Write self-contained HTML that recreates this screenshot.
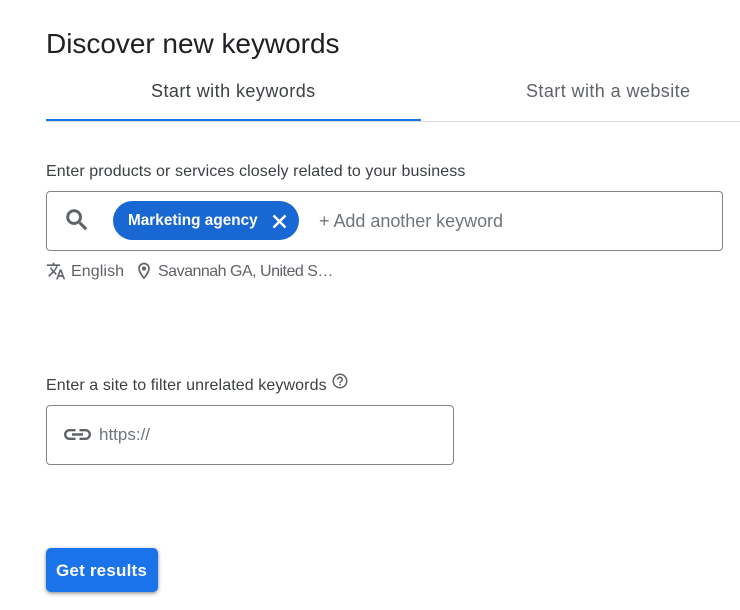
<!DOCTYPE html>
<html>
<head>
<meta charset="utf-8">
<style>
html,body{margin:0;padding:0;background:#fff;}
body{width:740px;height:610px;position:relative;overflow:hidden;font-family:"Liberation Sans",sans-serif;}
.t{position:absolute;white-space:nowrap;line-height:1;}
.box{position:absolute;border:1px solid #80868b;border-radius:4px;box-sizing:border-box;background:#fff;}
svg{position:absolute;}
</style>
</head>
<body>
<div class="t" style="left:46px;top:30px;font-size:28px;color:#202124;letter-spacing:-.03px;">Discover new keywords</div>
<div class="t" style="left:151px;top:82px;font-size:18px;color:#3c4043;letter-spacing:.45px;">Start with keywords</div>
<div class="t" style="left:526px;top:82px;font-size:18px;color:#5f6368;letter-spacing:.42px;">Start with a website</div>
<div style="position:absolute;left:46px;top:121px;width:694px;height:1px;background:#dadce0;"></div>
<div style="position:absolute;left:46px;top:119px;width:375px;height:2px;background:#1a73e8;"></div>

<div class="t" style="left:46px;top:164px;font-size:16px;color:#3c4043;letter-spacing:.1px;">Enter products or services closely related to your business</div>
<div class="box" style="left:46px;top:191px;width:677px;height:60px;"></div>
<svg style="left:63px;top:206px;" width="28" height="28" viewBox="0 0 24 24" fill="#5f6368" stroke="#5f6368" stroke-width=".5"><path d="M15.5 14h-.79l-.28-.27A6.47 6.47 0 0 0 16 9.5 6.5 6.5 0 1 0 9.5 16c1.61 0 3.09-.59 4.23-1.57l.27.28v.79l5 4.99L20.49 19l-4.99-5zm-6 0C7.01 14 5 11.99 5 9.5S7.01 5 9.5 5 14 7.01 14 9.5 11.99 14 9.5 14z"/></svg>
<div style="position:absolute;left:113px;top:201px;width:186px;height:39px;border-radius:20px;background:#1967d2;"></div>
<div class="t" style="left:128px;top:213px;font-size:15.3px;font-weight:bold;color:#fff;letter-spacing:.03px;">Marketing agency</div>
<svg style="left:272px;top:213.500px;" width="15" height="15" viewBox="0 0 15 15" fill="none" stroke="#fff" stroke-width="2.4"><path d="M1.5 1.5L13.5 13.5M13.5 1.5L1.5 13.5"/></svg>
<div class="t" style="left:319px;top:212px;font-size:18px;color:#70757a;letter-spacing:-.03px;">+ Add another keyword</div>

<svg style="left:46px;top:261px;" width="20" height="20" viewBox="0 0 24 24" fill="#5f6368"><path d="M12.87 15.07l-2.54-2.51.03-.03A17.52 17.52 0 0 0 14.07 6H17V4h-7V2H8v2H1v2h11.17C11.5 7.92 10.44 9.75 9 11.35 8.07 10.32 7.3 9.19 6.69 8h-2c.73 1.63 1.73 3.17 2.98 4.56l-5.09 5.02L4 19l5-5 3.11 3.11.76-2.04zM18.5 10h-2L12 22h2l1.12-3h4.75L21 22h2l-4.5-12zm-2.62 7l1.62-4.33L19.12 17h-3.24z"/></svg>
<div class="t" style="left:71px;top:264px;font-size:16px;color:#5f6368;letter-spacing:.1px;">English</div>
<svg style="left:133.5px;top:261px;" width="20" height="20" viewBox="0 0 24 24" fill="#5f6368"><path d="M12 2C8.13 2 5 5.13 5 9c0 5.25 7 13 7 13s7-7.75 7-13c0-3.87-3.13-7-7-7zM7 9c0-2.76 2.24-5 5-5s5 2.24 5 5c0 2.88-2.88 7.19-5 9.88C9.92 16.21 7 11.85 7 9z"/><circle cx="12" cy="9" r="2.5"/></svg>
<div class="t" style="left:158px;top:264px;font-size:16px;color:#5f6368;letter-spacing:-.5px;">Savannah GA, United S…</div>

<div class="t" style="left:46px;top:378px;font-size:16px;color:#3c4043;letter-spacing:.1px;">Enter a site to filter unrelated keywords</div>
<svg style="left:330.5px;top:372px;" width="18" height="18" viewBox="0 0 24 24" fill="#5f6368"><path d="M11 18h2v-2h-2v2zm1-16C6.48 2 2 6.48 2 12s4.48 10 10 10 10-4.48 10-10S17.52 2 12 2zm0 18c-4.41 0-8-3.59-8-8s3.59-8 8-8 8 3.59 8 8-3.59 8-8 8zm0-14c-2.21 0-4 1.79-4 4h2c0-1.1.9-2 2-2s2 .9 2 2c0 2-3 1.75-3 5h2c0-2.25 3-2.5 3-5 0-2.21-1.79-4-4-4z"/></svg>
<div class="box" style="left:46px;top:405px;width:408px;height:60px;"></div>
<svg style="left:64px;top:427px;" width="27" height="15" viewBox="0 0 27 15" fill="none" stroke="#5f6368" stroke-width="2.4"><path d="M11.500 3.200H5.500a4.300 4.300 0 0 0 0 8.600h6M15.500 3.200H21.500a4.300 4.300 0 0 1 0 8.600h-6M8 7.500H19"/></svg>
<div class="t" style="left:99px;top:426px;font-size:17px;color:#70757a;">https://</div>

<div style="position:absolute;left:46px;top:548px;width:112px;height:44px;border-radius:5px;background:#1a73e8;box-shadow:0 1px 3px rgba(60,64,67,.5),0 2px 5px rgba(60,64,67,.2);"></div>
<div class="t" style="left:56px;top:562px;font-size:17px;font-weight:bold;color:#fff;letter-spacing:.2px;">Get results</div>
</body>
</html>
